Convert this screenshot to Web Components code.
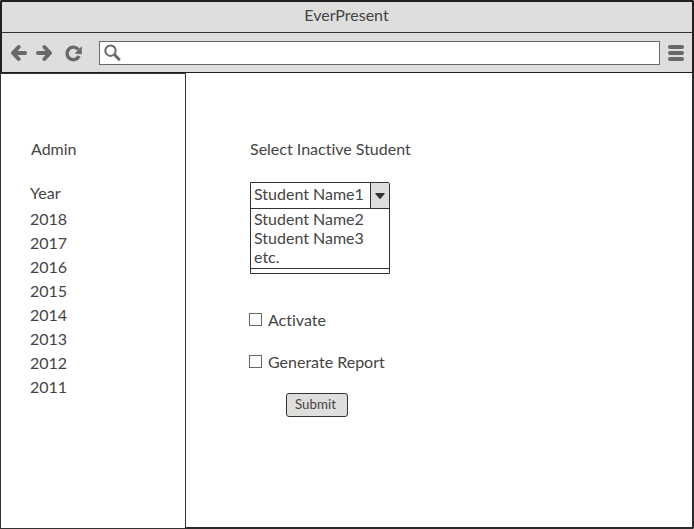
<!DOCTYPE html>
<html lang="en">
<head>
<meta charset="utf-8">
<title>EverPresent</title>
<style>
html,body{margin:0;height:100%;overflow:hidden}
body{font:16px/19px Lato,"Open Sans",sans-serif;font-variant-ligatures:none;color:#444;background:#fff}
</style>
</head>
<body>
<browser-window heading="EverPresent">
  <side-nav slot="side" heading="Admin" label="Year" items="2018,2017,2016,2015,2014,2013,2012,2011"></side-nav>
  <student-form></student-form>
</browser-window>
<script>
const define = (name, render) => customElements.define(name, class extends HTMLElement {
  connectedCallback() {
    if (!this.shadowRoot) this.attachShadow({mode: 'open'}).innerHTML = render(this);
  }
});

define('browser-window', el => `<style>
:host{display:grid;grid-template-rows:33px 40px 1fr;box-sizing:border-box;width:694px;height:529px;background:#fff}
header,nav{box-sizing:border-box;border:solid #231f20;border-width:0 2px 1px;background:#dededd}
header{border-top-width:2px;border-bottom-color:#333;border-radius:2px 2px 0 0;text-align:center;padding:3px 1px 0 0}
nav{display:flex;align-items:center;padding:0 8px 0 9px}
svg{display:block;flex:none}
.address{box-sizing:border-box;flex:1;height:24px;border:1px solid #696969;background:#fff;padding:2px 0 0 4px;margin:0 8px 0 14px}
.body{display:grid;grid-template-columns:186px 1fr;min-height:0}
main{box-sizing:border-box;border:solid #2d2a2c;border-width:0 2px 2px 0;border-radius:0 0 2px 0}
</style>
<header>${el.getAttribute('heading')}</header>
<nav>
<svg width="74" height="22" viewBox="11 42 74 22" fill="none" stroke="#696969" stroke-width="4" stroke-linecap="round" stroke-linejoin="round">
<path d="M18.600 47 13 53l5.600 6M13.500 53H25"/><path d="M44.400 47 50 53l-5.600 6M49.500 53H38"/>
<path stroke-width="3.400" stroke-linecap="butt" d="M78.400 49.600A6.300 6.300 0 1 0 79.100 56"/><path fill="#696969" stroke="none" d="M81.800 46.200v8l-7.200-.8z"/></svg>
<div class="address"><svg width="18" height="18" viewBox="0 0 18 18" fill="none" stroke="#696969"><circle cx="6.500" cy="6.700" r="5.200" stroke-width="2"/><path d="m10.800 11 4.200 4.200" stroke-width="3" stroke-linecap="round"/></svg></div>
<svg width="16" height="16" viewBox="0 0 16 16" fill="#696969"><rect width="16" height="4" rx="2"/><rect y="6" width="16" height="4" rx="2"/><rect y="12" width="16" height="4" rx="2"/></svg>
</nav>
<div class="body"><slot name="side"></slot><main><slot></slot></main></div>`);

define('side-nav', el => `<style>
:host{display:block;box-sizing:border-box;border:1px solid #333;padding:65px 0 0 29px}
h1{font:inherit;font-variant-ligatures:none;margin:0 0 25px 1px}
h2{font:inherit;margin:0 0 5px}
ul{list-style:none;margin:0;padding:0;line-height:24px}
</style><h1>${el.getAttribute('heading')}</h1><h2>${el.getAttribute('label')}</h2>
<ul>${el.getAttribute('items').split(',').map(y => `<li>${y}</li>`).join('')}</ul>`);

define('drop-down', el => {
  const [first, ...rest] = el.getAttribute('options').split(',');
  return `<style>
:host{display:block;box-sizing:border-box;width:140px;height:92px;border:1px solid #333;border-radius:0 2px 0 0}
.head{display:grid;grid-template-columns:1fr 19px;height:25px;border-bottom:1px solid #333}
.value{padding:1px 0 0 3px;white-space:nowrap}
.arrow{display:grid;place-items:center;background:#dededd;border-left:1px solid #333;border-radius:0 1px 2px 0}
.list{box-sizing:border-box;height:60px;border-bottom:1px solid #333;padding:0 0 0 3px}
</style><div class="head"><span class="value">${first}</span><span class="arrow"><svg width="10" height="6" viewBox="0 0 10 6"><path fill="#333" d="M.8 0h8.400q.8.200.3.900L5.800 5.400q-.8.700-1.600 0L.5.900Q0 .2.800 0z"/></svg></span></div>
<div class="list">${rest.map(o => `<div>${o}</div>`).join('')}</div>`;
});

define('check-row', () => `<style>
:host{display:flex;align-items:center;height:19px}
i{box-sizing:border-box;width:13px;height:13px;border:1px solid #666;margin-right:6px;background:#fff}
</style><i></i><slot></slot>`);

define('push-button', () => `<style>
:host{display:block;box-sizing:border-box;width:62px;height:24px;border:1px solid #333;border-radius:3px;background:#dededd;font-size:13.330px;line-height:16px;padding:2px 0 0 8px}
</style><slot></slot>`);

define('student-form', () => `<style>
:host{display:block;padding:66px 0 0 64px}
drop-down{margin:24px 0 36px}
check-row{margin:0 0 23px -1px}
push-button{margin:-1px 0 0 36px}
</style><div>Select Inactive Student</div>
<drop-down options="Student Name1,Student Name2,Student Name3,etc."></drop-down>
<check-row>Activate</check-row><check-row>Generate Report</check-row>
<push-button>Submit</push-button>`);
</script>
</body>
</html>
